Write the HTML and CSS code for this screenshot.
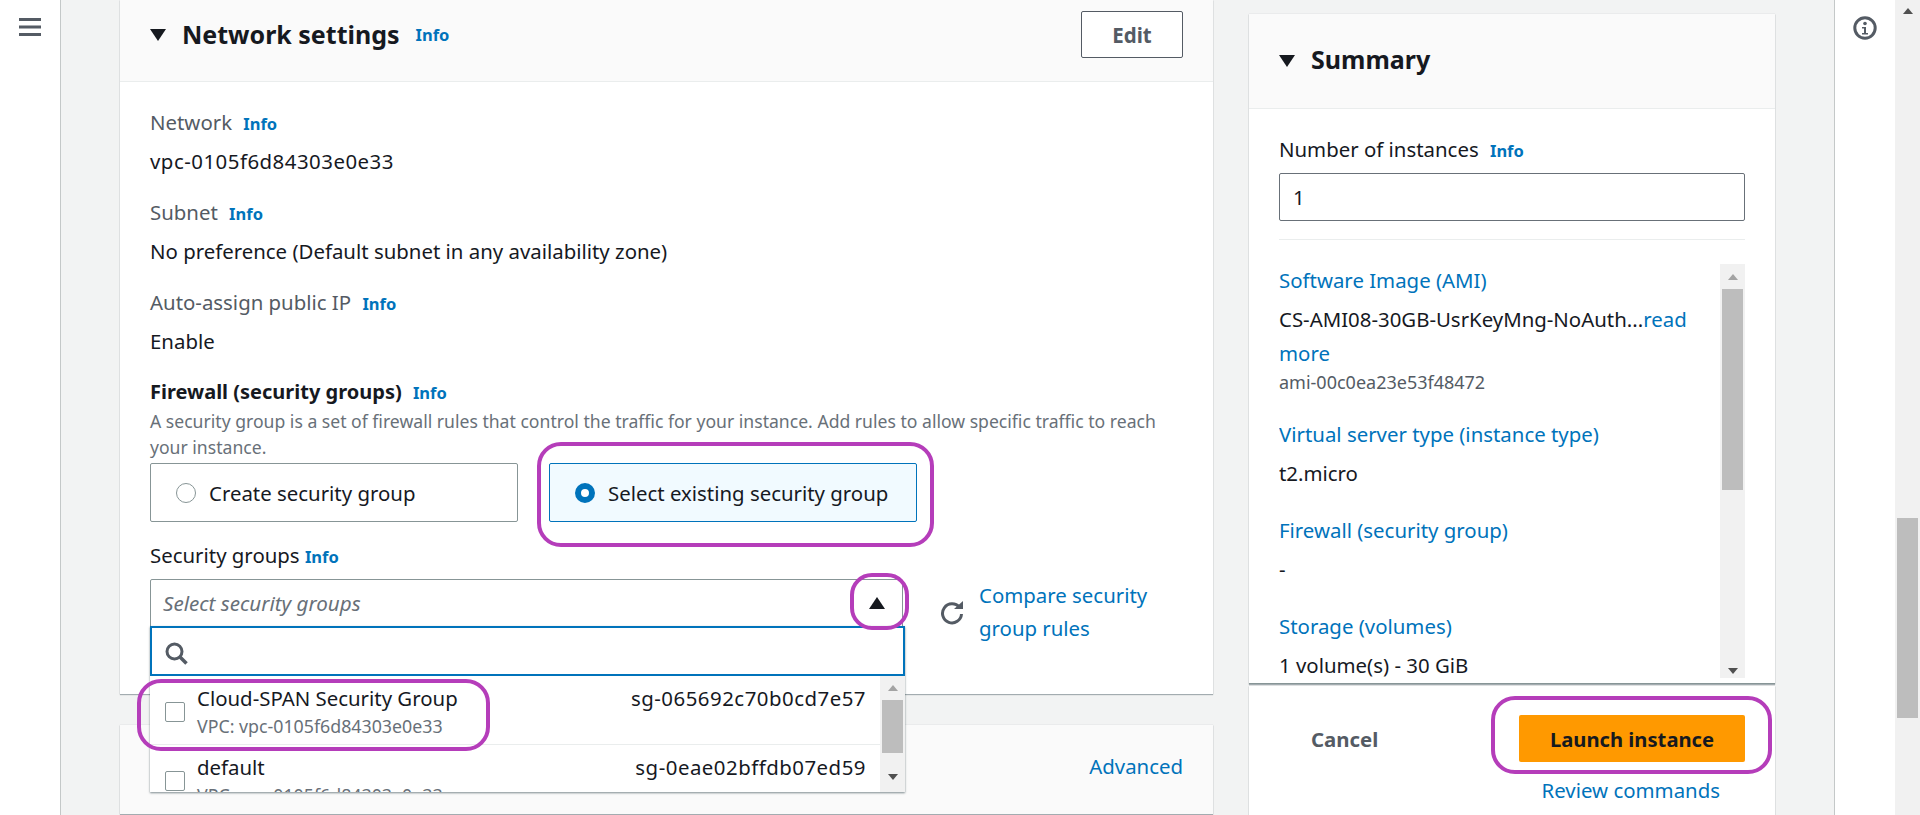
FILE: index.html
```html
<!DOCTYPE html>
<html lang="en">
<head>
  <title>Launch an instance</title>
  <link rel="stylesheet" href="styles.css">
</head>
<body>
  <div class="nav">
    <svg class="menu-icon" width="22" height="18" viewBox="0 0 22 18"><path d="M0 1.5h22M0 9h22M0 16.5h22" stroke="#545b64" stroke-width="3"/></svg>
  </div>

  <div class="main">
    <div class="left-col">
      <section class="card network">
        <div class="card-head">
          <svg class="caret" width="16" height="12" viewBox="0 0 16 12"><path d="M0 0h16L8 12z" fill="#16191f"/></svg>
          <h2>Network settings</h2>
          <a class="info head-info">Info</a>
          <button class="edit-btn">Edit</button>
        </div>
        <div class="card-body">
          <div class="field">
            <div class="label">Network <a class="info">Info</a></div>
            <div class="value">vpc-0105f6d84303e0e33</div>
          </div>
          <div class="field">
            <div class="label">Subnet <a class="info">Info</a></div>
            <div class="value">No preference (Default subnet in any availability zone)</div>
          </div>
          <div class="field">
            <div class="label">Auto-assign public IP <a class="info">Info</a></div>
            <div class="value">Enable</div>
          </div>
          <div class="label strong">Firewall (security groups) <a class="info">Info</a></div>
          <p class="desc">A security group is a set of firewall rules that control the traffic for your instance. Add rules to allow specific traffic to reach your instance.</p>
          <div class="radio-row">
            <div class="radio-card">
              <span class="radio"></span>
              Create security group
            </div>
            <div class="radio-card selected">
              <span class="radio on"></span>
              Select existing security group
            </div>
          </div>
          <div class="label dark sg-label">Security groups <a class="info sg-info">Info</a></div>
          <div class="sg-row">
            <div class="select">
              <span class="placeholder">Select security groups</span>
              <svg class="select-caret" width="16" height="12" viewBox="0 0 16 12"><path d="M0 12h16L8 0z" fill="#16191f"/></svg>
              <div class="dropdown">
                <div class="search">
                  <svg width="23" height="23" viewBox="0 0 23 23"><circle cx="9.5" cy="9.5" r="7.5" fill="none" stroke="#545b64" stroke-width="3"/><path d="M15 15l6.5 6.5" stroke="#545b64" stroke-width="3.5"/></svg>
                </div>
                <div class="options">
                  <div class="option-list">
                    <div class="option first">
                      <span class="check"></span>
                      <div class="option-text">
                        <div class="option-name">Cloud-SPAN Security Group</div>
                        <div class="option-sub">VPC: vpc-0105f6d84303e0e33</div>
                      </div>
                      <div class="option-id">sg-065692c70b0cd7e57</div>
                    </div>
                    <div class="option">
                      <span class="check"></span>
                      <div class="option-text">
                        <div class="option-name">default</div>
                        <div class="option-sub">VPC: vpc-0105f6d84303e0e33</div>
                      </div>
                      <div class="option-id">sg-0eae02bffdb07ed59</div>
                    </div>
                  </div>
                  <div class="scrollbar list-bar">
                    <span class="arrow-up"></span>
                    <span class="thumb"></span>
                    <span class="arrow-down"></span>
                  </div>
                </div>
              </div>
            </div>
            <svg class="refresh" width="26" height="24" viewBox="0 0 26 24"><path d="M20.5 6.5A9.5 9.5 0 1 0 22.5 13" fill="none" stroke="#545b64" stroke-width="3"/><path d="M15 8h9V0z" fill="#545b64"/></svg>
            <a class="compare">Compare security group rules</a>
          </div>
        </div>
      </section>

      <section class="card advanced">
        <a class="advanced-link">Advanced</a>
      </section>
    </div>

    <div class="right-col">
      <section class="card summary">
        <div class="card-head summary-head">
          <svg class="caret" width="16" height="12" viewBox="0 0 16 12"><path d="M0 0h16L8 12z" fill="#16191f"/></svg>
          <h2>Summary</h2>
        </div>
        <div class="summary-body">
          <div class="label dark">Number of instances <a class="info">Info</a></div>
          <div class="count-input">1</div>
          <div class="divider"></div>
          <div class="summary-scroll">
            <div class="summary-list">
              <a class="sum-title">Software Image (AMI)</a>
              <div class="sum-value wrap">CS-AMI08-30GB-UsrKeyMng-NoAuth...<a>read more</a></div>
              <div class="sum-sub">ami-00c0ea23e53f48472</div>
              <a class="sum-title next">Virtual server type (instance type)</a>
              <div class="sum-value">t2.micro</div>
              <a class="sum-title next">Firewall (security group)</a>
              <div class="sum-value">-</div>
              <a class="sum-title next">Storage (volumes)</a>
              <div class="sum-value">1 volume(s) - 30 GiB</div>
            </div>
            <div class="scrollbar sum-bar">
              <span class="arrow-up"></span>
              <span class="thumb"></span>
              <span class="arrow-down"></span>
            </div>
          </div>
        </div>
      </section>
      <section class="card footer">
        <div class="footer-row">
          <a class="cancel">Cancel</a>
          <button class="launch">Launch instance</button>
        </div>
        <a class="review">Review commands</a>
      </section>
    </div>
  </div>

  <div class="tools">
    <svg width="24" height="24" viewBox="0 0 24 24"><circle cx="12" cy="12" r="10.2" fill="none" stroke="#545b64" stroke-width="3"/><circle cx="12" cy="7.5" r="1.8" fill="#545b64"/><path d="M9 11h4v6h2v1.5H9V17h2v-4.500H9z" fill="#545b64"/></svg>
  </div>
  <div class="page-bar">
    <span class="arrow-up"></span>
    <span class="page-thumb"></span>
  </div>

  <!-- purple annotation outlines drawn over the screenshot -->
  <div class="mark mark-radio"></div>
  <div class="mark mark-caret"></div>
  <div class="mark mark-option"></div>
  <div class="mark mark-launch"></div>
</body>
</html>
```

FILE: styles.css
```css
* {
  box-sizing: border-box;
}

html, body {
  margin: 0;
  height: 815px;
  overflow: hidden;
}

body {
  display: flex;
  position: relative;
  font-family: "Noto Sans", Roboto, sans-serif;
  font-size: 20.4px;
  line-height: 24px;
  color: #16191f;
  background-color: #f2f3f3;
}

a {
  color: #0073bb;
}

/* side strips */
.nav {
  width: 61px;
  flex: none;
  padding: 18px 0 0 19px;
  background: white;
  border-right: 1px solid #c4c8c8;
}

.menu-icon {
  display: block;
}

.tools {
  width: 61px;
  flex: none;
  padding: 16px 0 0 18px;
  background: white;
  border-left: 1px solid #c4c8c8;
}

.page-bar {
  width: 25px;
  flex: none;
  background-color: #f1f1f1;
  display: flex;
  flex-direction: column;
  align-items: center;
  padding-top: 8px;
}

.page-thumb {
  display: block;
  width: 21px;
  height: 200px;
  margin-top: 504px;
  background-color: #bdbdbd;
}

/* main area */
.main {
  flex: 1;
  display: flex;
  padding-left: 59px;
}

.left-col {
  width: 1093px;
  flex: none;
}

.right-col {
  width: 526px;
  flex: none;
  margin-left: 36px;
  padding-top: 14px;
}

.card {
  background: white;
  box-shadow: 0 1px 1px rgba(0, 27, 36, 0.3), 0 0 1px rgba(0, 27, 36, 0.2);
}

.card-head {
  height: 82px;
  padding: 0 30px 12px;
  display: flex;
  align-items: center;
  background-color: #fafafa;
  border-bottom: 1px solid #eaeded;
}

.card-head h2 {
  margin: -2px 0 0 16px;
  font-size: 25px;
  font-weight: 700;
  line-height: 32px;
}

.caret {
  flex: none;
}

.info {
  font-size: 16.5px;
  font-weight: 700;
  line-height: 1;
  margin-left: 6px;
}

.sg-info {
  margin-left: 0;
}

.head-info {
  margin-left: 16px;
  margin-top: 2px;
}

.edit-btn {
  margin-left: auto;
  width: 102px;
  height: 47px;
  background: white;
  border: 1px solid #545b64;
  border-radius: 2px;
  font-family: inherit;
  font-size: 20.5px;
  font-weight: 700;
  color: #545b64;
}

.card-body {
  padding: 28px 30px 49px;
}

.field {
  margin-bottom: 27px;
}

.field:first-child .value {
  letter-spacing: 0.5px;
}

.label {
  color: #545b64;
}

.label.strong {
  margin-top: 3px;
  color: #16191f;
  font-size: 20px;
  font-weight: 700;
}

.label.dark {
  color: #16191f;
}

.value {
  margin-top: 15px;
}

.desc {
  margin: 4px 0 3px;
  font-size: 17.6px;
  line-height: 26px;
  color: #687078;
}

.radio-row {
  display: flex;
  gap: 31px;
}

.radio-card {
  width: 368px;
  height: 59px;
  padding-left: 25px;
  display: flex;
  align-items: center;
  gap: 13px;
  border: 1px solid #879596;
  border-radius: 2px;
}

.radio-card.selected {
  background-color: #f1faff;
  border-color: #0073bb;
}

.radio {
  width: 20px;
  height: 20px;
  border: 1.5px solid #879596;
  border-radius: 50%;
}

.radio.on {
  border: 6px solid #0073bb;
  background: white;
}

.sg-label {
  margin-top: 21px;
}

.sg-row {
  display: flex;
  margin-top: 12px;
}

.select {
  position: relative;
  width: 753px;
  height: 48px;
  flex: none;
  padding-left: 12px;
  display: flex;
  align-items: center;
  border: 1px solid #879596;
  border-radius: 2px 2px 0 0;
}

.placeholder {
  font-size: 20.6px;
  font-style: italic;
  color: #687078;
}

.select-caret {
  margin-left: auto;
  margin-right: 17px;
}

.dropdown {
  position: absolute;
  top: 46px;
  left: -1px;
  width: 755px;
  background: white;
  box-shadow: 0 1px 2px rgba(0, 27, 36, 0.5);
}

.search {
  height: 50px;
  padding: 14px 0 0 13px;
  border: 2px solid #0073bb;
}

.search svg {
  display: block;
}

.options {
  display: flex;
  height: 116px;
  overflow: hidden;
}

.option-list {
  flex: 1;
}

.option {
  height: 69px;
  padding: 10px 14px 0 15px;
  display: flex;
  align-items: flex-start;
}

.option.first {
  border-bottom: 1px solid #eaeded;
}

.check {
  width: 20px;
  height: 20px;
  flex: none;
  margin-top: 16px;
  border: 1px solid #879596;
  border-radius: 2px;
}

.option-text {
  margin-left: 12px;
}

.option-sub {
  margin-top: 4px;
  font-size: 17.8px;
  color: #687078;
}

.option-id {
  margin-left: auto;
  letter-spacing: 0.5px;
}

.scrollbar {
  flex: none;
  width: 25px;
  background-color: #f1f1f1;
  display: flex;
  flex-direction: column;
  align-items: center;
}

.arrow-up, .arrow-down {
  width: 0;
  height: 0;
  flex: none;
  border-left: 5.5px solid transparent;
  border-right: 5.5px solid transparent;
}

.arrow-up {
  border-bottom: 6px solid #a3a3a3;
}

.page-bar .arrow-up {
  border-bottom-color: #505050;
}

.arrow-down {
  border-top: 6px solid #505050;
}

.thumb {
  width: 21px;
  background-color: #bdbdbd;
}

.list-bar {
  padding-top: 9px;
}

.list-bar .thumb {
  height: 53px;
  margin-top: 9px;
}

.list-bar .arrow-down {
  margin-top: 21px;
}

.refresh {
  flex: none;
  margin: 22px 0 0 36px;
}

.compare {
  width: 190px;
  margin: 0 0 0 14px;
  line-height: 33px;
}

.advanced {
  height: 89px;
  margin-top: 31px;
  padding: 29px 30px 0;
  text-align: right;
  background-color: #fafafa;
}

/* summary column */
.summary-head {
  height: 95px;
  padding-bottom: 0;
}

.summary-head h2 {
  margin-top: -4px;
}

.summary-body {
  height: 575px;
  padding: 28px 30px 0;
  border-bottom: 1px solid #879596;
}

.count-input {
  height: 48px;
  margin-top: 12px;
  padding: 11px 13px;
  border: 1px solid #687078;
  border-radius: 2px;
}

.divider {
  height: 1px;
  margin: 18px 0 24px;
  background-color: #eaeded;
}

.summary-scroll {
  display: flex;
  height: 414px;
  overflow: hidden;
}

.summary-list {
  flex: 1;
  padding-top: 4px;
}

.sum-title {
  display: block;
}

.sum-title.next {
  margin-top: 33px;
}

.sum-sub + .sum-title.next {
  margin-top: 28px;
}

.sum-value {
  margin-top: 15px;
}

.sum-value.wrap {
  line-height: 34px;
  margin-top: 10px;
  padding-right: 20px;
}

.sum-sub {
  margin-top: 0;
  font-size: 18px;
  color: #545b64;
}

.sum-bar {
  padding-top: 10px;
}

.sum-bar .thumb {
  height: 201px;
  margin-top: 9px;
}

.sum-bar .arrow-down {
  margin-top: 178px;
}

.footer {
  height: 129px;
  margin-top: 2px;
  padding: 29px 30px 0;
}

.footer-row {
  display: flex;
  align-items: center;
  justify-content: space-between;
}

.cancel {
  margin-left: 32px;
  font-weight: 700;
  color: #545b64;
}

.launch {
  width: 226px;
  height: 47px;
  background-color: #ff9900;
  border: none;
  border-radius: 2px;
  font-family: inherit;
  font-size: 20.2px;
  font-weight: 700;
  color: #16191f;
}

.review {
  display: block;
  margin-top: 16px;
  text-align: right;
  padding-right: 25px;
}

/* annotation outlines */
.mark {
  position: absolute;
  border: 4px solid #b53dba;
}

.mark-radio {
  left: 537px;
  top: 442px;
  width: 397px;
  height: 105px;
  border-radius: 24px;
}

.mark-caret {
  left: 850px;
  top: 573px;
  width: 59px;
  height: 57px;
  border-radius: 22px;
}

.mark-option {
  left: 137px;
  top: 679px;
  width: 353px;
  height: 72px;
  border-radius: 24px;
}

.mark-launch {
  left: 1491px;
  top: 696px;
  width: 281px;
  height: 78px;
  border-radius: 24px;
}
```
